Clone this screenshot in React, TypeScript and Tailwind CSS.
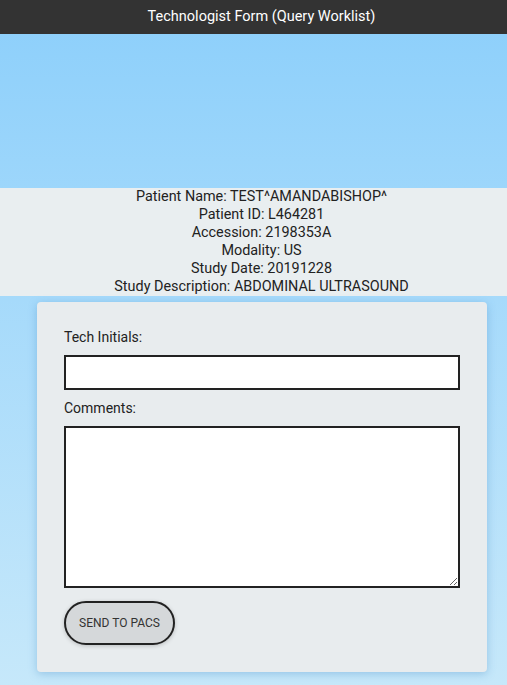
import React from "react";

export default function App() {
  return (
    <div className="w-full min-h-screen overflow-hidden bg-gradient-to-b from-[#8ccffb] to-[#c6e8fa]">
      <div
        className="w-[523px]"
        style={{ fontFamily: "Roboto, 'Liberation Sans', sans-serif" }}
      >
        <div className="h-[34px] bg-[#333333] text-white text-[14.5px] flex items-center justify-center">
          Technologist Form (Query Worklist)
        </div>
        <div className="h-[154px]" />
        <div className="bg-[#e9eef0] text-[#222] text-[14.4px] leading-[18px] text-center">
          <div>Patient Name: TEST^AMANDABISHOP^</div>
          <div>Patient ID: L464281</div>
          <div>Accession: 2198353A</div>
          <div>Modality: US</div>
          <div>Study Date: 20191228</div>
          <div>Study Description: ABDOMINAL ULTRASOUND</div>
        </div>
        <div className="ml-[37px] w-[450px] mt-[6px] bg-[#e8ecee] rounded-[4px] shadow-[0_2px_8px_rgba(60,130,190,0.35)] px-[27px] pt-[25px] pb-[27px] text-[#222]">
          <label className="block text-[14px] leading-[20px]">Tech Initials:</label>
          <input
            type="text"
            className="block w-full h-[35px] mt-[8px] bg-white border-2 border-[#222] outline-none"
          />
          <label className="block text-[14px] leading-[20px] mt-[8px]">Comments:</label>
          <textarea className="block w-full h-[162px] mt-[8px] bg-white border-2 border-[#222] outline-none resize" />
          <button className="mt-[13px] h-[44px] w-[111px] rounded-full border-2 border-[#222] bg-[#d5d8da] text-[12px] text-[#333] shadow-[0_1px_4px_rgba(0,0,0,0.2)]">
            SEND TO PACS
          </button>
        </div>
      </div>
    </div>
  );
}
